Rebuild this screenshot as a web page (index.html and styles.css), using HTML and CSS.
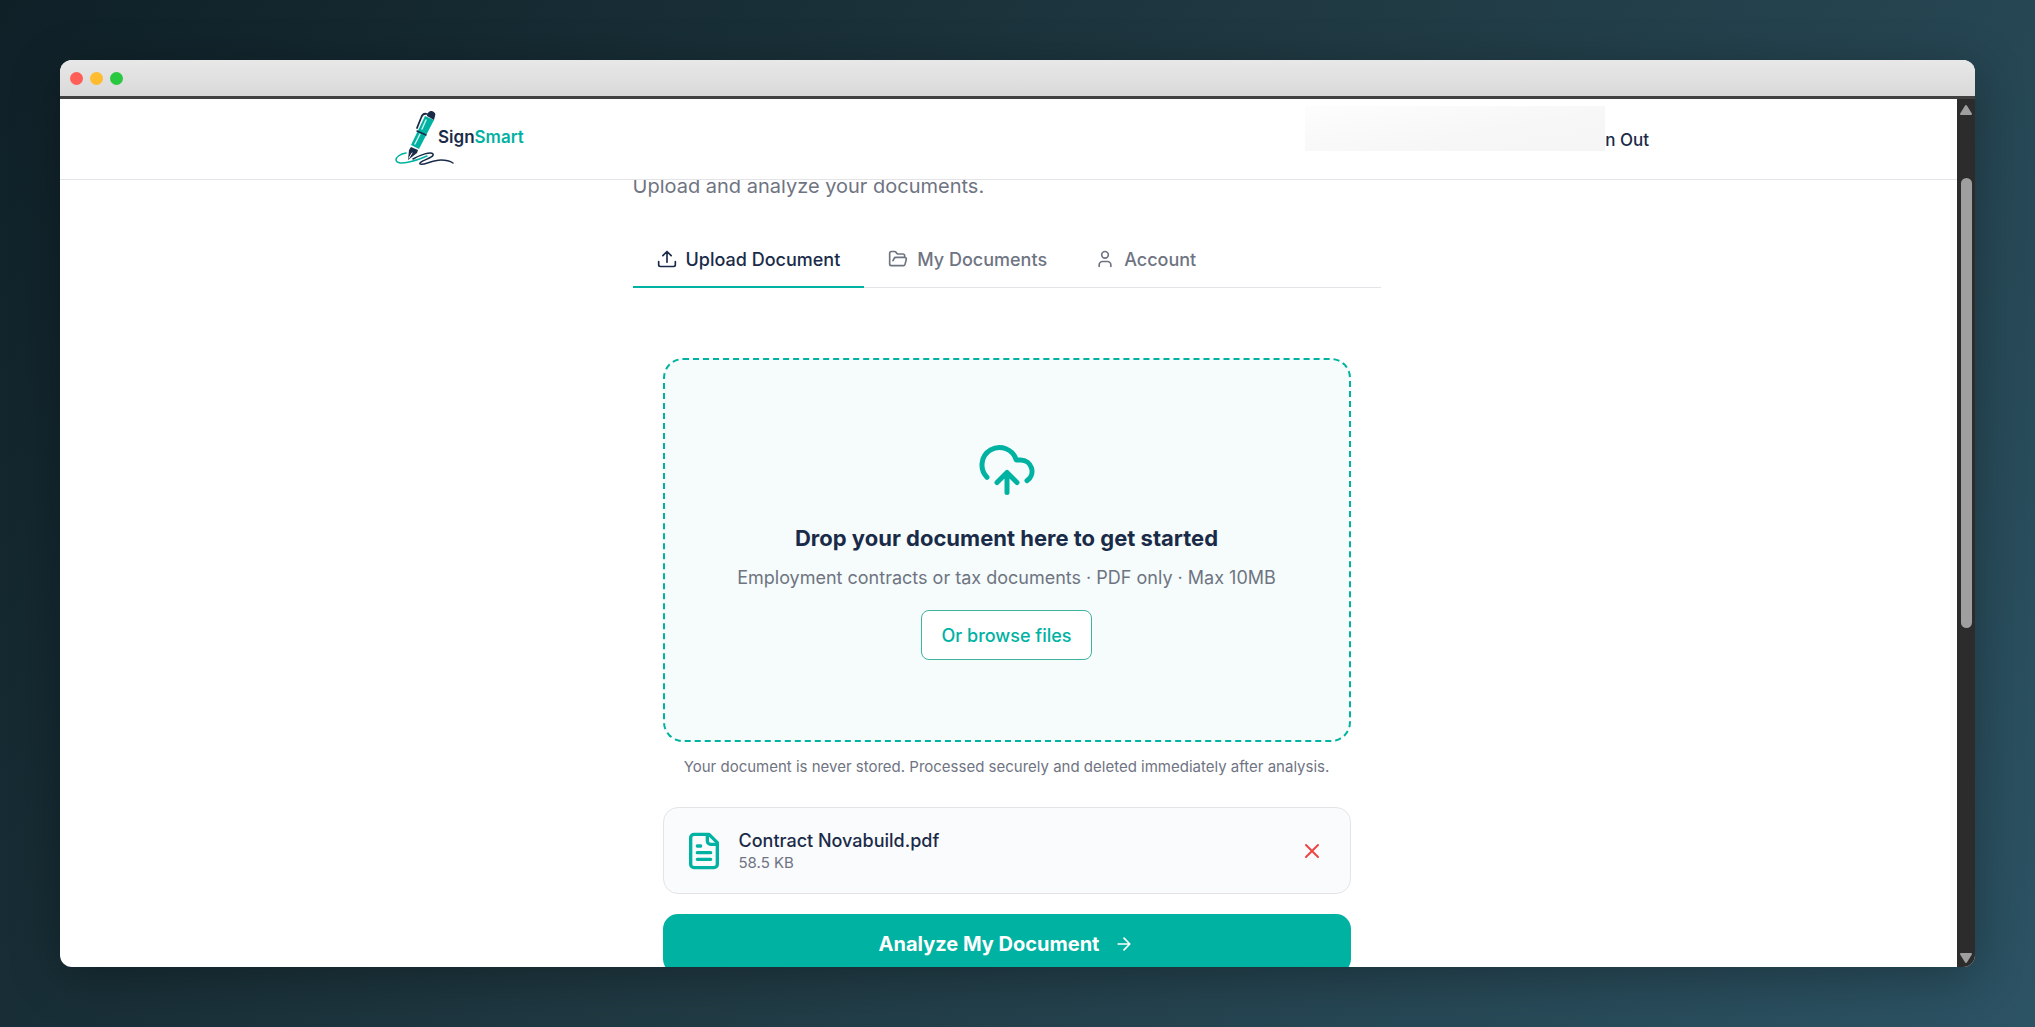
FILE: index.html
```html
<!DOCTYPE html>
<html lang="en">
<head>
<meta charset="utf-8">
<title>SignSmart</title>
<link rel="stylesheet" href="styles.css">
</head>
<body>
<div class="window">
  <div class="titlebar">
    <span class="light light-close"></span>
    <span class="light light-min"></span>
    <span class="light light-max"></span>
  </div>
  <div class="viewport">
    <div class="page">
      <header class="site-header">
        <a class="logo" href="#">
          <svg class="logo-mark" viewBox="0 0 62 58" aria-hidden="true">
            <path d="M12 43C6 44 2 47 2 50c1 6 17 2 31-4" fill="none" stroke="#00b2a2" stroke-width="1.500" stroke-linecap="round"/>
            <path d="M19 49c7-4 18-8 20-5 2 4-15 7-13 10 3 2 12-4 21-4 5 0 9 1 12 3" fill="none" stroke="#1a2b49" stroke-width="1.500" stroke-linecap="round"/>
            <path d="M31 6l9 4-15 29-8-4z" fill="#00b2a2"/>
            <path d="M32 10l-4 9M26 24l-5 10" fill="none" stroke="#c9f1ec" stroke-width="1.500"/>
            <path d="M33 6c0-3 2-5 5-5 3 1 4 3 3 5l-1 4z" fill="#1a2b49"/>
            <path d="M23 21l9 4" stroke="#1a2b49" stroke-width="1.500"/>
            <path d="M17 37l7 3-1 3-9 7 1-10z" fill="#1a2b49"/>
            <path d="M15 48l3-5" stroke="#fff" stroke-width="1"/>
            <path d="M33 4c-3-1-5 1-6 4l-4 10" fill="none" stroke="#1a2b49" stroke-width="1.800" stroke-linecap="round"/>
          </svg>
          <span class="logo-text">Sign<b>Smart</b></span>
        </a>
        <nav class="account-nav">
          <span class="redacted"></span>
          <a class="sign-out" href="#">n Out</a>
        </nav>
      </header>
      <main class="content">
        <p class="intro">Upload and analyze your documents.</p>
        <nav class="tabs">
          <button class="tab tab-active" type="button">
            <svg viewBox="0 0 24 24" aria-hidden="true"><path d="M12 16V3M7 8l5-5 5 5M2 15v4a2 2 0 0 0 2 2h16a2 2 0 0 0 2-2v-4"/></svg>
            Upload Document
          </button>
          <button class="tab" type="button">
            <svg viewBox="0 0 24 24" aria-hidden="true"><path d="m6 14 1.500-2.900A2 2 0 0 1 9.240 10H20a2 2 0 0 1 1.940 2.500l-1.540 6a2 2 0 0 1-1.950 1.500H4a2 2 0 0 1-2-2V5a2 2 0 0 1 2-2h3.900a2 2 0 0 1 1.690.9l.81 1.200a2 2 0 0 0 1.670.9H18a2 2 0 0 1 2 2v2"/></svg>
            My Documents
          </button>
          <button class="tab" type="button">
            <svg viewBox="0 0 24 24" aria-hidden="true"><path d="M19 21v-2a4 4 0 0 0-4-4H9a4 4 0 0 0-4 4v2"/><circle cx="12" cy="7" r="4"/></svg>
            Account
          </button>
        </nav>
        <section class="upload">
          <div class="dropzone">
            <svg class="cloud" viewBox="0 0 24 24" aria-hidden="true"><path d="M12 13v8M4 14.899A7 7 0 1 1 15.710 8h1.790a4.500 4.500 0 0 1 2.500 8.242M8 17l4-4 4 4"/></svg>
            <h2>Drop your document here to get started</h2>
            <p>Employment contracts or tax documents · PDF only · Max 10MB</p>
            <button class="browse" type="button">Or browse files</button>
          </div>
          <p class="privacy">Your document is never stored. Processed securely and deleted immediately after analysis.</p>
          <div class="file">
            <svg class="file-icon" viewBox="0 0 24 24" aria-hidden="true"><path d="M15 2H6a2 2 0 0 0-2 2v16a2 2 0 0 0 2 2h12a2 2 0 0 0 2-2V7ZM14 2v4a2 2 0 0 0 2 2h4M10 9H8M16 13H8M16 17H8"/></svg>
            <div class="file-info">
              <span class="file-name">Contract Novabuild.pdf</span>
              <span class="file-size">58.5 KB</span>
            </div>
            <button class="remove" type="button" aria-label="Remove file"><svg viewBox="0 0 24 24" aria-hidden="true"><path d="M18 6 6 18M6 6l12 12"/></svg></button>
          </div>
          <button class="analyze" type="button">Analyze My Document
            <svg viewBox="0 0 24 24" aria-hidden="true"><path d="M5 12h14M12 5l7 7-7 7"/></svg>
          </button>
        </section>
      </main>
    </div>
    <div class="scrollbar">
      <svg viewBox="0 0 12 10" aria-hidden="true"><path d="M6 1l5 8H1z"/></svg>
      <div class="track"><div class="thumb"></div></div>
      <svg viewBox="0 0 12 10" aria-hidden="true"><path d="M1 1h10L6 9z"/></svg>
    </div>
  </div>
</div>
</body>
</html>
```
FILE: styles.css
```css
* { box-sizing: border-box; }

body {
  margin: 0;
  height: 100vh;
  padding: 60px;
  overflow: hidden;
  background: linear-gradient(125deg, #0f2027, #203a43 50%, #2c5364);
  font-family: Inter, "Liberation Sans", sans-serif;
  color: #1a2b49;
}

p, h2 { margin: 0; }
button { font: inherit; cursor: pointer; }
a { color: inherit; text-decoration: none; }
svg {
  flex: none;
  fill: none;
  stroke: currentColor;
  stroke-width: 2;
  stroke-linecap: round;
  stroke-linejoin: round;
}

.window {
  display: flex;
  flex-direction: column;
  height: 100%;
  overflow: hidden;
  border-radius: 12px;
  background: #fff;
  box-shadow: 0 10px 50px rgba(0, 0, 0, 0.3);
}

.titlebar {
  display: flex;
  flex: none;
  align-items: center;
  gap: 7px;
  height: 39px;
  padding: 0 10px;
  border-bottom: 3px solid #414141;
  background: linear-gradient(#e8e8e8, #d9d9d9);
}
.light { width: 13px; height: 13px; border-radius: 50%; }
.light-close { background: #ff5f57; }
.light-min { background: #febc2e; }
.light-max { background: #28c840; }

.viewport { display: flex; flex: 1; min-height: 0; }
.page { flex: 1; overflow: hidden; }

.site-header {
  position: relative;
  z-index: 1;
  display: flex;
  justify-content: space-between;
  height: 81px;
  padding: 0 308px 0 334px;
  border-bottom: 1px solid #e2e4e8;
  background: #fff;
}
.logo { display: flex; align-items: flex-start; padding-top: 11px; }
.logo-mark { width: 62px; height: 58px; stroke: none; }
.logo-text {
  margin-left: -18px;
  padding-top: 17px;
  font-size: 17px;
  line-height: 20px;
  font-weight: 600;
}
.logo-text b { color: #00b2a2; font-weight: 600; }

.account-nav { display: flex; align-items: flex-start; padding-top: 7px; }
.redacted {
  width: 300px;
  height: 45px;
  background: linear-gradient(170deg, #fdfdfd, #f7f7f7 60%, #f5f5f5);
}
.sign-out { padding-top: 22px; font-size: 17px; line-height: 24px; font-weight: 500; }

.content { max-width: 752px; margin: 0 auto; padding-right: 4px; }
.intro {
  margin-top: -8px;
  height: 56px;
  font-size: 20px;
  line-height: 28px;
  color: #6f7482;
}

.tabs { display: flex; border-bottom: 1px solid #e2e4e8; }
.tab {
  display: flex;
  align-items: center;
  gap: 9px;
  height: 60px;
  margin-bottom: -1px;
  padding: 4px 24px 0;
  border: 0;
  border-bottom: 2px solid transparent;
  background: none;
  color: #6f7482;
  font-size: 18px;
  font-weight: 500;
}
.tab svg { width: 20px; height: 20px; }
.tab-active { color: #1a2b49; border-color: #00b2a2; }

.upload { display: flex; flex-direction: column; padding: 70px 30px 0; }
.dropzone {
  display: flex;
  flex-direction: column;
  align-items: center;
  height: 384px;
  padding-top: 80px;
  border: 2px dashed #00b2a2;
  border-radius: 20px;
  background: #f5fcfb;
}
.cloud { width: 60px; height: 60px; color: #00b2a2; }
.dropzone h2 { margin-top: 20px; font-size: 22px; line-height: 36px; font-weight: 700; }
.dropzone p { margin-top: 8px; font-size: 18px; line-height: 28px; color: #6f7482; }
.browse {
  height: 50px;
  margin-top: 18px;
  padding: 0 19px;
  border: 1px solid #3fb3a0;
  border-radius: 8px;
  background: #fff;
  color: #00b2a2;
  font-size: 18px;
  font-weight: 500;
}
.privacy {
  margin-top: 12px;
  text-align: center;
  font-size: 15px;
  line-height: 26px;
  color: #6f7482;
}

.file {
  display: flex;
  align-items: center;
  gap: 15px;
  height: 87px;
  margin-top: 27px;
  padding: 0 26px 0 20px;
  border: 1px solid #e2e4e8;
  border-radius: 15px;
  background: #fafbfd;
}
.file-icon { width: 40px; height: 40px; color: #00b2a2; }
.file-info { display: flex; flex: 1; flex-direction: column; }
.file-name { font-size: 18px; line-height: 24px; font-weight: 500; }
.file-size { font-size: 15px; line-height: 20px; color: #6f7482; }
.remove { display: flex; padding: 0; border: 0; background: none; color: #ef4444; }
.remove svg { width: 24px; height: 24px; }

.analyze {
  display: flex;
  align-items: center;
  justify-content: center;
  gap: 15px;
  height: 60px;
  margin-top: 20px;
  border: 0;
  border-radius: 15px;
  background: #00b2a2;
  color: #fff;
  font-size: 20px;
  font-weight: 700;
}
.analyze svg { width: 20px; height: 20px; }

.scrollbar {
  display: flex;
  flex: none;
  flex-direction: column;
  align-items: center;
  width: 18px;
  padding: 6px 0 4px;
  background: #2c2c2c;
}
.scrollbar svg { width: 12px; height: 10px; fill: #9f9f9f; stroke: #9f9f9f; }
.track { flex: 1; padding-top: 63px; }
.thumb { width: 11px; height: 58%; border-radius: 6px; background: #9f9f9f; }
```
